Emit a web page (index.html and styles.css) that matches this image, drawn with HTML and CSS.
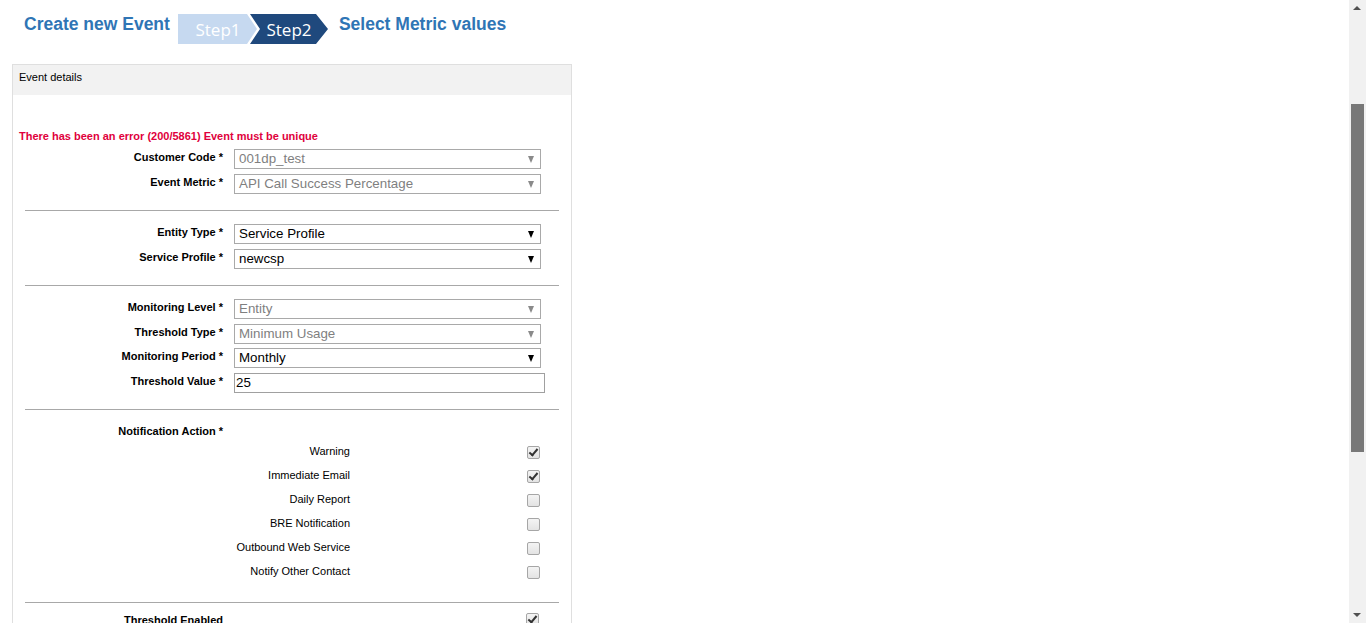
FILE: index.html
```html
<!DOCTYPE html>
<html lang="en">
<head>
<meta charset="utf-8">
<title>Create new Event</title>
<link rel="stylesheet" href="styles.css">
</head>
<body>
<div class="page">
  <header class="head">
    <h1 class="title">Create new Event</h1>
    <svg class="steps" width="150" height="30" viewBox="0 0 150 30">
      <polygon points="0,0 69,0 79,15 69,30 0,30" fill="#c6d9f0"/>
      <polygon points="72,0 138,0 150,15 138,30 72,30 82,15" fill="#1f497d"/>
      <text x="40" y="21.5" text-anchor="middle" class="step-txt">Step1</text>
      <text x="111" y="21.5" text-anchor="middle" class="step-txt">Step2</text>
    </svg>
    <h1 class="title sub">Select Metric values</h1>
  </header>

  <section class="panel">
    <div class="panel-head">Event details</div>
    <div class="panel-body">
      <p class="error">There has been an error (200/5861) Event must be unique</p>

      <div class="group">
        <div class="row"><label class="lbl">Customer Code *</label><div class="sel dis">001dp_test<span class="arr"></span></div></div>
        <div class="row"><label class="lbl">Event Metric *</label><div class="sel dis">API Call Success Percentage<span class="arr"></span></div></div>
      </div>
      <hr class="sep">
      <div class="group">
        <div class="row"><label class="lbl">Entity Type *</label><div class="sel">Service Profile<span class="arr"></span></div></div>
        <div class="row"><label class="lbl">Service Profile *</label><div class="sel">newcsp<span class="arr"></span></div></div>
      </div>
      <hr class="sep">
      <div class="group g4">
        <div class="row"><label class="lbl">Monitoring Level *</label><div class="sel dis">Entity<span class="arr"></span></div></div>
        <div class="row"><label class="lbl">Threshold Type *</label><div class="sel dis">Minimum Usage<span class="arr"></span></div></div>
        <div class="row"><label class="lbl">Monitoring Period *</label><div class="sel">Monthly<span class="arr"></span></div></div>
        <div class="row"><label class="lbl">Threshold Value *</label><div class="inp">25</div></div>
      </div>
      <hr class="sep sep2">
      <div class="notif-title"><span class="lbl">Notification Action *</span></div>
      <div class="checks">
        <div class="crow"><span class="clbl">Warning</span><span class="cb on"></span></div>
        <div class="crow"><span class="clbl">Immediate Email</span><span class="cb on"></span></div>
        <div class="crow"><span class="clbl">Daily Report</span><span class="cb"></span></div>
        <div class="crow"><span class="clbl">BRE Notification</span><span class="cb"></span></div>
        <div class="crow"><span class="clbl">Outbound Web Service</span><span class="cb"></span></div>
        <div class="crow"><span class="clbl">Notify Other Contact</span><span class="cb"></span></div>
      </div>
      <hr class="sep sep3">
      <div class="trow"><span class="lbl">Threshold Enabled</span><span class="cb on tcb"></span></div>
    </div>
  </section>
</div>

<div class="scrollbar">
  <span class="sb-up"></span>
  <span class="sb-thumb"></span>
  <span class="sb-down"></span>
</div>
</body>
</html>
```

FILE: styles.css
```css
html, body {
  margin: 0;
  padding: 0;
  height: 623px;
  overflow: hidden;
  background: #fff;
  font-family: "Liberation Sans", Arial, sans-serif;
  color: #000;
}

.page {
  padding: 0 0 0 12px;
}

.head {
  display: flex;
  align-items: flex-start;
  height: 64px;
  padding: 14px 0 0 12px;
  box-sizing: border-box;
}

.title {
  margin: 0;
  font-size: 17.5px;
  font-weight: bold;
  color: #2f75b5;
  line-height: 20px;
}

.title.sub {
  margin-left: 11px;
}

.steps {
  display: block;
  margin-left: 8px;
}

.step-txt {
  font-family: "Open Sans", "DejaVu Sans", sans-serif;
  font-size: 17px;
  fill: #fff;
}

.panel {
  width: 558px;
  border: 1px solid #dfdfdf;
  border-bottom: none;
  height: 600px;
}

.panel-head {
  background: #f2f2f2;
  height: 30px;
  line-height: 24px;
  padding-left: 6px;
  font-size: 11px;
}

.panel-body {
  padding: 35px 0 0 0;
}

.error {
  margin: 0 0 6px 6px;
  color: #e0003c;
  font-size: 11px;
  font-weight: bold;
  line-height: 13px;
}

.group {
  display: flex;
  flex-direction: column;
  gap: 5px;
}

.group.g4 {
  gap: 4.67px;
}

.row {
  display: flex;
  align-items: center;
  height: 20px;
}

.lbl {
  display: block;
  width: 210px;
  text-align: right;
  font-size: 11px;
  font-weight: bold;
  line-height: 13px;
}

.row .lbl {
  margin-top: -3px;
}

.sel, .inp {
  position: relative;
  box-sizing: border-box;
  margin-left: 11px;
  width: 307px;
  height: 20px;
  border: 1px solid #a9a9a9;
  background: #fff;
  font-size: 13.333px;
  line-height: 18px;
  padding-left: 4px;
  color: #000;
}

.sel.dis {
  color: #7f7f7f;
}

.inp {
  width: 311px;
  padding-left: 1px;
  border-color: #a0a0a0;
}

.arr {
  position: absolute;
  right: 6px;
  top: 6px;
  width: 0;
  height: 0;
  border-left: 3.5px solid transparent;
  border-right: 3.5px solid transparent;
  border-top: 7px solid #000;
}

.dis .arr {
  border-top-color: #8a8a8a;
}

.sep {
  margin: 16px 12px 13px 12px;
  border: none;
  border-top: 1px solid #a8a8a8;
  height: 0;
}

.sep2 {
  margin-top: 16px;
  margin-bottom: 15px;
}

.notif-title {
  height: 13px;
  margin-bottom: 7.5px;
}

.checks {
  display: flex;
  flex-direction: column;
  gap: 11px;
}

.crow {
  display: flex;
  align-items: center;
  height: 13px;
}

.clbl {
  width: 337px;
  text-align: right;
  font-size: 11px;
  line-height: 13px;
}

.cb {
  position: relative;
  display: block;
  box-sizing: border-box;
  width: 13px;
  height: 13px;
  margin-left: 177px;
  margin-top: 2px;
  border: 1px solid #a6a6a6;
  border-radius: 2px;
  background: linear-gradient(#f4f4f4, #e3e3e3);
}

.cb.on::after {
  content: "";
  position: absolute;
  left: 3px;
  top: 0px;
  width: 3px;
  height: 7px;
  border-right: 2px solid #333;
  border-bottom: 2px solid #333;
  transform: rotate(40deg);
}

.sep3 {
  margin-top: 23.5px;
  margin-bottom: 11.5px;
}

.trow {
  display: flex;
  align-items: center;
  height: 13px;
}

.tcb {
  margin-left: 303px;
  margin-top: -2px;
}

.scrollbar {
  position: fixed;
  top: 0;
  right: 0;
  width: 17px;
  height: 623px;
  background: #f1f1f1;
}

.sb-up, .sb-down {
  position: absolute;
  left: 4px;
  width: 0;
  height: 0;
  border-left: 4px solid transparent;
  border-right: 4px solid transparent;
}

.sb-up {
  top: 6px;
  border-bottom: 4px solid #505050;
}

.sb-down {
  bottom: 6px;
  border-top: 4px solid #505050;
}

.sb-thumb {
  position: absolute;
  left: 2px;
  top: 104px;
  width: 13px;
  height: 348px;
  background: #787878;
}
```
